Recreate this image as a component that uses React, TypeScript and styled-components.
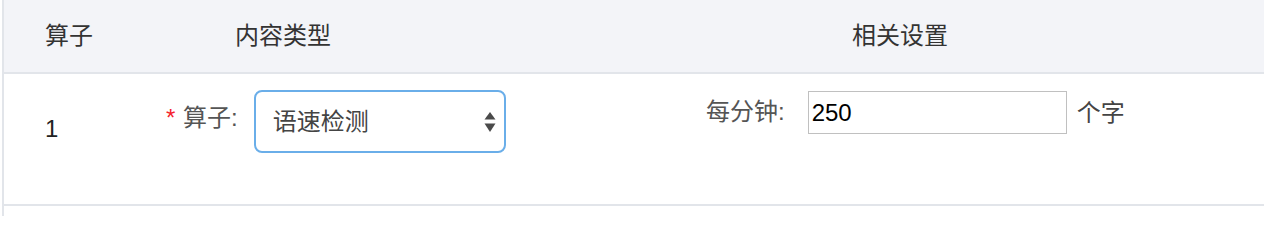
import React, { useState } from "react";
import styled, { createGlobalStyle } from "styled-components";

const GlobalStyle = createGlobalStyle`
  html, body {
    margin: 0;
    padding: 0;
    background: #ffffff;
  }
  body {
    font-family: "Liberation Sans", "Noto Sans CJK SC", sans-serif;
    font-size: 24px;
    color: #333333;
  }
`;

const COLS = "141px 535px 1fr";
const LINE = "#e2e5ea";

const PageEl = styled.div`
  padding-left: 2px;
  height: 216px;
  box-sizing: border-box;
`;

const TableEl = styled.div`
  border-left: 2px solid ${LINE};
  height: 216px;
  box-sizing: border-box;
`;

const HeadRowEl = styled.div`
  display: grid;
  grid-template-columns: ${COLS};
  height: 74px;
  box-sizing: border-box;
  background: #f3f4f8;
  border-bottom: 2px solid ${LINE};
`;

const HeadCellEl = styled.div<{ $pad: number }>`
  display: flex;
  align-items: center;
  padding-left: ${(p) => p.$pad}px;
  padding-bottom: 1px;
  line-height: 36px;
  color: #333333;
  white-space: nowrap;
`;

const BodyRowEl = styled.div`
  display: grid;
  grid-template-columns: ${COLS};
  height: 132px;
  box-sizing: border-box;
  border-bottom: 2px solid ${LINE};
`;

const IndexCellEl = styled.div`
  padding: 37px 0 0 41px;
  line-height: 36px;
  color: #222222;
`;

const FieldCellEl = styled.div<{ $pad: number; $top: number }>`
  display: flex;
  align-items: center;
  align-self: start;
  padding: ${(p) => p.$top}px 0 0 ${(p) => p.$pad}px;
  white-space: nowrap;
`;

const LabelEl = styled.label<{ $gap: number; $lift: number }>`
  line-height: 36px;
  color: #555555;
  margin-right: ${(p) => p.$gap}px;
  margin-bottom: ${(p) => p.$lift}px;
`;

const RequiredMark = styled.span`
  color: #f5222d;
  margin-right: 1px;
`;

const SelectBoxEl = styled.div`
  display: flex;
  align-items: center;
  width: 252px;
  height: 63px;
  box-sizing: border-box;
  border: 2px solid #6aaee9;
  border-radius: 8px;
  background: #ffffff;
  padding: 0 8px 0 17px;
`;

const NativeSelect = styled.select`
  flex: 1;
  appearance: none;
  -webkit-appearance: none;
  border: none;
  outline: none;
  background: transparent;
  padding: 0;
  margin: 0;
  font: inherit;
  font-size: 24px;
  color: #444444;
  cursor: pointer;
`;

const NumberInput = styled.input`
  width: 259px;
  height: 43px;
  box-sizing: border-box;
  border: 1px solid #c0c0c0;
  padding: 0 3px;
  margin: 0;
  font: inherit;
  font-size: 24px;
  color: #000000;
  outline: none;
  background: #ffffff;
`;

const UnitEl = styled.span`
  margin-left: 10px;
  line-height: 36px;
  color: #444444;
`;

const ArrowsIcon = () => (
  <svg width="12" height="22" viewBox="0 0 12 22" aria-hidden="true">
    <path d="M6 1 L11.5 8.5 H0.5 Z" fill="#4a4a4a" />
    <path d="M6 21 L11.5 12.5 H0.5 Z" fill="#4a4a4a" />
  </svg>
);

export default function App() {
  const [op, setOp] = useState("speed");
  const [perMinute, setPerMinute] = useState("250");

  return (
    <PageEl>
      <GlobalStyle />
      <TableEl>
        <HeadRowEl>
          <HeadCellEl $pad={41}>算子</HeadCellEl>
          <HeadCellEl $pad={90}>内容类型</HeadCellEl>
          <HeadCellEl $pad={172}>相关设置</HeadCellEl>
        </HeadRowEl>
        <BodyRowEl>
          <IndexCellEl>1</IndexCellEl>
          <FieldCellEl $pad={21} $top={16}>
            <LabelEl $gap={16} $lift={7}>
              <RequiredMark>*</RequiredMark> 算子:
            </LabelEl>
            <SelectBoxEl>
              <NativeSelect value={op} onChange={(e) => setOp(e.target.value)}>
                <option value="speed">语速检测</option>
                <option value="volume">音量检测</option>
              </NativeSelect>
              <ArrowsIcon />
            </SelectBoxEl>
          </FieldCellEl>
          <FieldCellEl $pad={26} $top={17}>
            <LabelEl $gap={23} $lift={2}>每分钟:</LabelEl>
            <NumberInput
              value={perMinute}
              onChange={(e) => setPerMinute(e.target.value)}
            />
            <UnitEl>个字</UnitEl>
          </FieldCellEl>
        </BodyRowEl>
      </TableEl>
    </PageEl>
  );
}
